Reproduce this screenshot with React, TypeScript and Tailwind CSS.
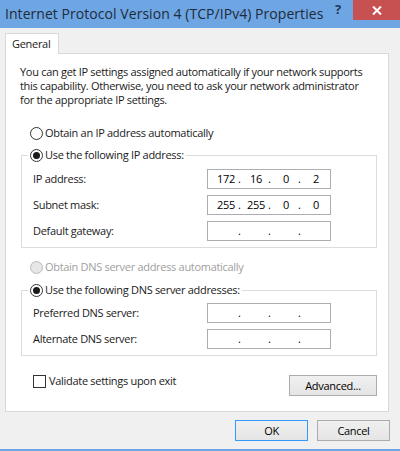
import React, { Fragment } from "react";

function Radio({ checked, disabled }: { checked?: boolean; disabled?: boolean }) {
  return (
    <span
      className={
        "w-[13px] h-[13px] shrink-0 rounded-full border flex items-center justify-center " +
        (disabled ? "border-[#bcbcbc] bg-[#e6e6e6]" : "border-[#333333] bg-white")
      }
    >
      {checked && <span className="w-[7px] h-[7px] rounded-full bg-[#1a1a1a]" />}
    </span>
  );
}

function IpBox({ v }: { v?: string[] }) {
  return (
    <div className="h-[20px] border border-[#abadb3] bg-white flex items-center pl-[6px] text-black">
      {[0, 1, 2, 3].map((i) => (
        <Fragment key={i}>
          <span className="w-[24px] text-center">{v ? v[i] : ""}</span>
          {i < 3 && <span className="w-[6px] text-left">.</span>}
        </Fragment>
      ))}
    </div>
  );
}

function Row({ label, v }: { label: string; v?: string[] }) {
  return (
    <div className="grid grid-cols-[174px_124px] items-center h-[20px] pl-[11px]">
      <span>{label}</span>
      <IpBox v={v} />
    </div>
  );
}

function Btn({ children, def, w }: { children: React.ReactNode; def?: boolean; w: string }) {
  return (
    <div
      className={
        "h-[21px] flex items-center justify-center border bg-gradient-to-b from-[#f0f0f0] to-[#e5e5e5] text-black " +
        (def ? "border-[#3399ff] " : "border-[#acacac] ") +
        w
      }
    >
      {children}
    </div>
  );
}

export default function App() {
  return (
    <div className="w-[400px] h-[451px] bg-[#f0f0f0] flex flex-col font-['Open_Sans',sans-serif] text-[11px] leading-[14px] tracking-[-0.3px] text-[#1a1a1a] overflow-hidden">
      {/* Title bar */}
      <div className="h-[28px] shrink-0 bg-[#6ea6e4] flex items-start">
        <div className="flex-1 min-w-0 pl-[5px] pt-[4px] text-[14px] leading-[20px] tracking-[0.05px] text-[#1f2a3a] whitespace-nowrap">
          Internet Protocol Version 4 (TCP/IPv4) Properties
        </div>
        <div className="w-[14px] mr-[8px] text-center text-[13px] leading-[16px] font-bold text-[#1e395b] pt-[1px]">?</div>
        <div className="w-[47px] h-[20px] bg-[#c75050] flex items-center justify-center">
          <svg width="10" height="9" viewBox="0 0 10 9">
            <path d="M1 0.5 L9 8.5 M9 0.5 L1 8.5" stroke="#ffffff" strokeWidth="2" />
          </svg>
        </div>
      </div>

      {/* Body */}
      <div className="flex-1 flex flex-col pt-[5px] pl-[5px] pr-[11px]">
        <div className="flex">
          <div className="relative z-10 w-[54px] h-[21px] -mb-px bg-white border border-b-0 border-[#d9d9d9] pl-[6px] flex items-center">
            General
          </div>
        </div>
        <div className="bg-white border border-[#d9d9d9] pt-[11px] pl-[14px] pr-[11px] pb-[15px]">
          <p className="whitespace-nowrap">
            You can get IP settings assigned automatically if your network supports
            <br />
            this capability. Otherwise, you need to ask your network administrator
            <br />
            for the appropriate IP settings.
          </p>

          <div className="mt-[19px] ml-[10px] flex items-center gap-[2px] h-[14px]">
            <Radio />
            <span>Obtain an IP address automatically</span>
          </div>

          <fieldset className="mt-[8px] ml-[1px] border border-[#dcdcdc] p-0 pt-[7px] pb-[6px] m-0">
            <legend className="ml-[6px] px-[2px] flex items-center gap-[2px] h-[14px]">
              <Radio checked />
              <span>Use the following IP address:</span>
            </legend>
            <div className="flex flex-col gap-[6px]">
              <Row label="IP address:" v={["172", "16", "0", "2"]} />
              <Row label="Subnet mask:" v={["255", "255", "0", "0"]} />
              <Row label="Default gateway:" />
            </div>
          </fieldset>

          <div className="mt-[12px] ml-[10px] flex items-center gap-[2px] h-[14px] text-[#a0a0a0]">
            <Radio disabled />
            <span>Obtain DNS server address automatically</span>
          </div>

          <fieldset className="mt-[9px] ml-[1px] border border-[#dcdcdc] p-0 pt-[6px] pb-[6px] m-0">
            <legend className="ml-[6px] px-[2px] flex items-center gap-[2px] h-[14px]">
              <Radio checked />
              <span>Use the following DNS server addresses:</span>
            </legend>
            <div className="flex flex-col gap-[6px]">
              <Row label="Preferred DNS server:" />
              <Row label="Alternate DNS server:" />
            </div>
          </fieldset>

          <div className="mt-[18px] flex items-start justify-between">
            <div className="ml-[13px] flex items-center gap-[3px] h-[14px]">
              <span className="w-[13px] h-[13px] border border-[#333333] bg-white" />
              <span>Validate settings upon exit</span>
            </div>
            <div className="mt-px">
              <Btn w="w-[88px]">Advanced...</Btn>
            </div>
          </div>
        </div>

        <div className="pt-[8px] flex justify-end gap-[9px] -mr-px">
          <Btn def w="w-[73px]">OK</Btn>
          <Btn w="w-[73px]">Cancel</Btn>
        </div>
      </div>

      <div className="h-[2px] shrink-0 bg-[#6ea6e4]" />
    </div>
  );
}
